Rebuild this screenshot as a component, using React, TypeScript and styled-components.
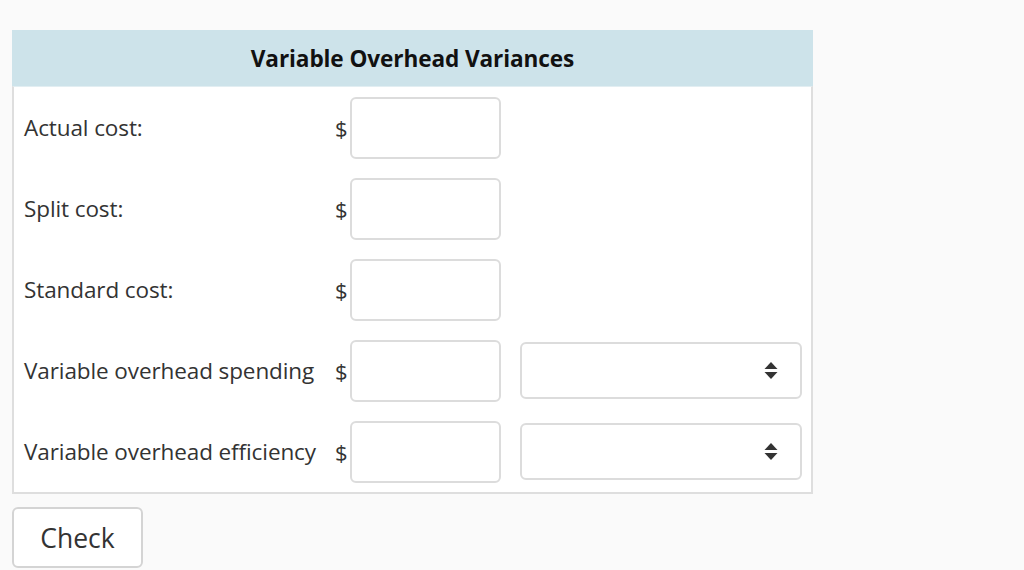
import React from 'react';
import styled, { createGlobalStyle } from 'styled-components';

const GlobalStyle = createGlobalStyle`
  html, body {
    margin: 0;
    padding: 0;
    background-color: #fafafa;
    font-family: 'Open Sans', 'Liberation Sans', sans-serif;
    color: #333;
  }
`;

const rows = [
  { label: 'Actual cost:', select: false },
  { label: 'Split cost:', select: false },
  { label: 'Standard cost:', select: false },
  { label: 'Variable overhead spending', select: true },
  { label: 'Variable overhead efficiency', select: true }
];

const SortIcon = () => (
  <svg width="14" height="18" viewBox="0 0 14 18">
    <polygon points="7,0 13.5,7 0.5,7" fill="#333" />
    <polygon points="0.5,10 13.5,10 7,17" fill="#333" />
  </svg>
);

const App = () => {
  return (
    <Page>
      <GlobalStyle />
      <Card>
        <Header>Variable Overhead Variances</Header>
        <Body>
          {rows.map(r => (
            <Row key={r.label}>
              <Label>{r.label}</Label>
              <Dollar>$</Dollar>
              <Input type="text" />
              {r.select ? (
                <Select>
                  <SortIcon />
                </Select>
              ) : <span />}
            </Row>
          ))}
        </Body>
      </Card>
      <CheckButton>Check</CheckButton>
    </Page>
  );
};

const Page = styled.div`
  padding: 30px 12px 0 12px;
`;

const Card = styled.div`
  width: 801px;
`;

const Header = styled.div`
  height: 56px;
  background-color: #cde3ea;
  display: flex;
  align-items: center;
  justify-content: center;
  font-weight: 700;
  font-size: 22.6px;
  letter-spacing: -0.1px;
  color: #111;
`;

const Body = styled.div`
  background-color: #fff;
  border: 2px solid #dedede;
  border-top: 1px solid #e2eef2;
  padding-left: 10px;
`;

const Row = styled.div`
  display: grid;
  grid-template-columns: 311px 15px 151px 282px;
  height: 81px;
  align-items: center;
  & > :nth-child(4) {
    margin-left: 19px;
  }
`;

const Label = styled.div`
  font-size: 22.5px;
  letter-spacing: -0.1px;
  color: #333;
  white-space: nowrap;
`;

const Dollar = styled.div`
  font-size: 22px;
  text-align: left;
`;

const Input = styled.input`
  box-sizing: border-box;
  width: 151px;
  height: 62px;
  border: 2px solid #dcdcdc;
  border-radius: 6px;
  background: #fff;
  outline: none;
  font-size: 20px;
`;

const Select = styled.div`
  box-sizing: border-box;
  width: 282px;
  height: 57px;
  border: 2px solid #dcdcdc;
  border-radius: 6px;
  background: #fff;
  display: flex;
  align-items: center;
  justify-content: flex-end;
  padding-right: 22px;
`;

const CheckButton = styled.button`
  margin-top: 13px;
  box-sizing: border-box;
  width: 131px;
  height: 61px;
  border: 2px solid #d4d4d4;
  border-radius: 6px;
  background: #fff;
  font-family: 'Open Sans', 'Liberation Sans', sans-serif;
  font-size: 26.5px;
  color: #333;
  cursor: pointer;
`;

export default App;
